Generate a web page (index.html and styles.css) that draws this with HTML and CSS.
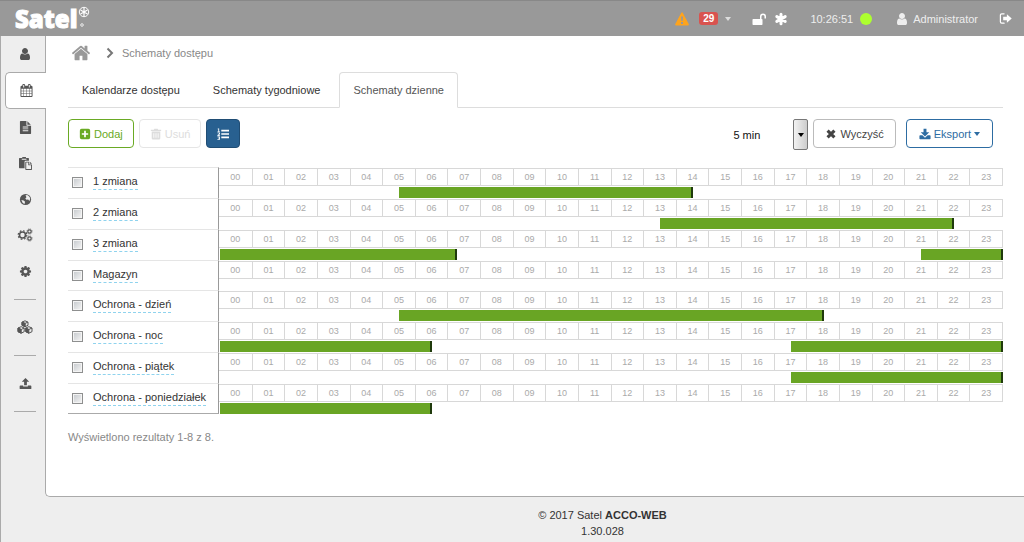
FILE: index.html
```html
<!DOCTYPE html>
<html lang="pl">
<head>
<meta charset="utf-8">
<title>Satel ACCO-WEB</title>
<link rel="stylesheet" href="styles.css">
</head>
<body>
<svg class="sprite" aria-hidden="true">
  <symbol id="i-user" viewBox="0 0 1792 1792"><path d="M1536 1399q0 109-62.500 187t-150.500 78h-854q-88 0-150.500-78t-62.500-187q0-85 8.500-160.500t31.500-152 58.500-131 94-89 134.500-34.500q131 128 313 128t313-128q76 0 134.500 34.500t94 89 58.500 131 31.500 152 8.500 160.500zm-256-887q0 159-112.500 271.500t-271.500 112.500-271.500-112.500-112.500-271.500 112.500-271.500 271.500-112.500 271.500 112.500 112.500 271.500z"/></symbol>
  <symbol id="i-home" viewBox="0 0 1792 1792"><path d="M1472 992v480q0 26-19 45t-45 19h-384v-384h-256v384h-384q-26 0-45-19t-19-45v-480q0-1 .5-3t.5-3l575-474 575 474q1 2 1 6zm223-69l-62 74q-8 9-21 11h-3q-13 0-21-7l-692-577-692 577q-12 8-24 7-13-2-21-11l-62-74q-8-10-7-23.500t11-21.500l719-599q32-26 76-26t76 26l244 204v-195q0-14 9-23t23-9h192q14 0 23 9t9 23v408l219 182q10 8 11 21.500t-7 23.500z"/></symbol>
  <symbol id="i-calendar" viewBox="0 0 1792 1792"><path d="M192 1664h288v-288h-288v288zm352 0h320v-288h-320v288zm-352-352h288v-320h-288v320zm352 0h320v-320h-320v320zm-352-384h288v-288h-288v288zm736 736h320v-288h-320v288zm-384-736h320v-288h-320v288zm768 736h288v-288h-288v288zm-384-352h320v-320h-320v320zm-352-864v-288q0-13-9.500-22.500t-22.500-9.500h-64q-13 0-22.500 9.500t-9.500 22.500v288q0 13 9.500 22.500t22.500 9.500h64q13 0 22.500-9.500t9.500-22.500zm736 864h288v-320h-288v320zm-384-384h320v-288h-320v288zm384 0h288v-288h-288v288zm32-480v-288q0-13-9.500-22.500t-22.500-9.500h-64q-13 0-22.500 9.500t-9.500 22.500v288q0 13 9.500 22.500t22.500 9.500h64q13 0 22.500-9.500t9.500-22.500zm384-64v1280q0 52-38 90t-90 38h-1408q-52 0-90-38t-38-90v-1280q0-52 38-90t90-38h128v-96q0-66 47-113t113-47h64q66 0 113 47t47 113v96h384v-96q0-66 47-113t113-47h64q66 0 113 47t47 113v96h128q52 0 90 38t38 90z"/></symbol>
  <symbol id="i-file" viewBox="0 0 1792 1792"><path d="M1596 476q14 14 28 36h-472v-472q22 14 36 28zm-476 164h544v1056q0 40-28 68t-68 28h-1344q-40 0-68-28t-28-68v-1600q0-40 28-68t68-28h800v544q0 40 28 68t68 28zm160 736v-64q0-14-9-23t-23-9h-704q-14 0-23 9t-9 23v64q0 14 9 23t23 9h704q14 0 23-9t9-23zm0-256v-64q0-14-9-23t-23-9h-704q-14 0-23 9t-9 23v64q0 14 9 23t23 9h704q14 0 23-9t9-23zm0-256v-64q0-14-9-23t-23-9h-704q-14 0-23 9t-9 23v64q0 14 9 23t23 9h704q14 0 23-9t9-23z"/></symbol>
  <symbol id="i-paste" viewBox="0 0 14 14"><path fill-rule="evenodd" d="M1 1h2.500V0h4v1H10q.7 0 .7.700V4H7Q6 4 6 5v7H.7Q0 12 0 11.300V1.700Q0 1 .7 1zM3 2v1h5V2zM7.500 5H11v3h3v5.300q0 .7-.7.700H7.500q-.7 0-.7-.7V5.700q0-.7.700-.7zM7.800 6v7H13V9h-3V6zM11.700 5L14 7.300h-2.300z"/></symbol>
  <symbol id="i-globe" viewBox="0 0 14 14"><circle cx="7" cy="7" r="6"/><path class="land" d="M7 2.200L9.500 2.500 11.500 4.300 12 6.500 11.300 8.500 9.800 7 8 7.300 6.800 6 8 4.500zM2.500 7.500L5 8l1.500 1.500L6 11.800 4 10.800z"/></symbol>
  <symbol id="i-cog" viewBox="0 0 1792 1792"><path d="M1152 896q0-106-75-181t-181-75-181 75-75 181 75 181 181 75 181-75 75-181zm512-109v222q0 12-8 23t-20 13l-185 28q-19 54-39 91 35 50 107 138 10 12 10 25t-9 23q-27 37-99 108t-94 71q-12 0-26-9l-138-108q-44 23-91 38-16 136-29 186-7 28-36 28h-222q-14 0-24.500-8.500t-11.500-21.500l-28-184q-49-16-90-37l-141 107q-10 9-25 9-14 0-25-11-126-114-165-168-7-10-7-23 0-12 8-23 15-21 51-66.500t54-70.500q-27-50-41-99l-183-27q-13-2-21-12.500t-8-23.500v-222q0-12 8-23t19-13l186-28q14-46 39-92-40-57-107-138-10-12-10-24 0-10 9-23 26-36 98.500-107.500t94.500-71.500q13 0 26 10l138 107q44-23 91-38 16-136 29-186 7-28 36-28h222q14 0 24.500 8.500t11.500 21.500l28 184q49 16 90 37l142-107q9-9 24-9 13 0 25 10 129 119 165 170 7 8 7 22 0 12-8 23-15 21-51 66.500t-54 70.500q26 50 41 98l183 28q13 2 21 12.500t8 23.500z"/></symbol>
  <symbol id="i-cogs" viewBox="0 0 16 14"><g fill="none" stroke="currentColor"><circle cx="5.500" cy="7" r="3" stroke-width="1.600"/><circle cx="5.500" cy="7" r="4.300" stroke-width="1.200" stroke-dasharray="1.700 1.677"/><circle cx="12.500" cy="3.500" r="1.700" stroke-width="1.200"/><circle cx="12.500" cy="3.500" r="2.600" stroke-width=".8" stroke-dasharray="1 1.040"/><circle cx="12.500" cy="10.500" r="1.700" stroke-width="1.200"/><circle cx="12.500" cy="10.500" r="2.600" stroke-width=".8" stroke-dasharray="1 1.040"/></g></symbol>
  <symbol id="i-cubes" viewBox="0 0 16 14"><g stroke="currentColor" stroke-width="1" stroke-linejoin="round"><path fill="none" d="M8 .8l3 1.300v3.200L8 6.700 5 5.300V2.100zM8 3.400v3.300M5 2.100l3 1.300 3-1.300M4.200 6.700l3 1.300v3.700l-3 1.500-3.200-1.500V8zM1 8l3.200 1.500L7.200 8M11.800 6.700l3.200 1.300v3.700l-3.200 1.500-3-1.500V8zM8.800 8l3 1.500L15 8"/><path d="M5 2.100l3 1.300v3.300L5 5.300zM1 8l3.200 1.500v3.700L1 11.700zM8.800 8l3 1.500v3.700l-3-1.500z"/></g></symbol>
  <symbol id="i-upload" viewBox="0 0 14 14"><path d="M7 1l4 4.200H8.500V9h-3V5.200H3zM1.500 9.200h3v1h5v-1h3q.8 0 .8.800v2.300q0 .7-.8.700h-11q-.8 0-.8-.7V10q0-.8.800-.8z"/></symbol>
  <symbol id="i-download" viewBox="0 0 14 14"><path d="M5.300 1h3.400v4H12L7 9.800 2 5h3.300zM1.300 8.500H4l3 2.800 3-2.800h2.700q.8 0 .8.800v2.900q0 .8-.8.800H1.300q-.8 0-.8-.8V9.300q0-.8.800-.8z"/></symbol>
  <symbol id="i-warn" viewBox="0 0 14 14"><path fill-rule="evenodd" d="M6.300.8q.7-1 1.400 0l6 11.200q.5 1.300-.8 1.500H1.100Q-.2 13.300.3 12zM6 4.500L6.300 9h1.400L8 4.500zM6 10v2h2v-2z"/></symbol>
  <symbol id="i-unlock" viewBox="0 0 14 14"><path d="M1.200 7H8V4.500a3 3 0 0 1 6 0V6.500h-1.500v-2a1.500 1.500 0 0 0-3 0V7h.3q.7 0 .7.700v4.600q0 .7-.7.700H1.200q-.7 0-.7-.7V7.700q0-.7.700-.7z"/></symbol>
  <symbol id="i-asterisk" viewBox="0 0 14 14"><path fill="none" stroke="currentColor" stroke-width="3" stroke-linecap="round" d="M7 2.200v9.600M2.800 4.600l8.400 4.800M2.800 9.400l8.400-4.800"/></symbol>
  <symbol id="i-signout" viewBox="0 0 14 14"><path fill="none" stroke="currentColor" stroke-width="1.300" stroke-linecap="round" d="M5.500 2H3Q1.500 2 1.500 3.500v7Q1.500 12 3 12h2.500"/><path d="M8.500 2.300L13.700 7l-5.200 4.700V9H4.500V5h4z"/></symbol>
  <symbol id="i-plus" viewBox="0 0 14 14"><path fill-rule="evenodd" d="M3 1h8q2 0 2 2v8q0 2-2 2H3q-2 0-2-2V3q0-2 2-2zM6 3.300V6H3.300v2H6v2.700h2V8h2.700V6H8V3.300z"/></symbol>
  <symbol id="i-trash" viewBox="0 0 14 14"><path fill-rule="evenodd" d="M4.500 2L5 .8h4L9.500 2H13v1.500H1V2zM2 4.200h10V12q0 1.500-1.500 1.500h-7Q2 13.500 2 12zM4 6v5.500h1V6zM6.500 6v5.500h1V6zM9 6v5.500h1V6z"/></symbol>
  <symbol id="i-list" viewBox="0 0 14 14"><path d="M5 2h9v2H5zM5 6h9v2H5zM5 10h9v2H5zM1 .5h1.500V4h1v.8H.5V4h1V1.500H.7zM.5 5.300h3v2L1.800 8.500h1.700v.8h-3v-1l1.800-1.400v-.7H.5zM.5 10h3v3.700h-3v-.8h2v-.7h-1v-.8h1v-.6h-2z"/></symbol>
  <symbol id="i-times" viewBox="0 0 14 14"><path fill="none" stroke="currentColor" stroke-width="3.600" d="M3 3l8 8M11 3l-8 8"/></symbol>
  <symbol id="i-chevron" viewBox="0 0 8 12"><path fill="none" stroke="currentColor" stroke-width="2" d="M1.500 1.500L6 6l-4.500 4.500"/></symbol>
  <symbol id="i-mark" viewBox="0 0 12 22"><g fill="none" stroke="currentColor"><circle cx="6" cy="6" r="4.700" stroke-width="1"/><path stroke-width="1.200" d="M6 2v8M2.500 4l7 4M2.500 8l7-4"/><circle cx="4" cy="19" r="1.300" stroke-width=".8"/></g></symbol>
</svg>

<header class="topbar">
  <a class="logo" href="#"><span>Satel</span><svg class="logo-mark"><use href="#i-mark"/></svg></a>
  <div class="status">
    <button class="alerts" type="button" aria-label="Alarmy"><svg class="icon warn"><use href="#i-warn"/></svg><span class="badge">29</span><span class="caret"></span></button>
    <div class="states"><svg class="icon"><use href="#i-unlock"/></svg><svg class="icon"><use href="#i-asterisk"/></svg></div>
    <div class="clock"><time>10:26:51</time><span class="dot"></span></div>
    <a class="account" href="#"><svg class="icon"><use href="#i-user"/></svg>Administrator</a>
    <a class="logout" href="#" aria-label="Wyloguj"><svg class="icon small"><use href="#i-signout"/></svg></a>
  </div>
</header>

<div class="body">
  <nav class="sidebar" aria-label="Menu">
    <a href="#" aria-label="Użytkownicy"><svg class="icon"><use href="#i-user"/></svg></a>
    <a href="#" class="active" aria-label="Schematy"><svg class="icon small"><use href="#i-calendar"/></svg></a>
    <a href="#" aria-label="Zdarzenia"><svg class="icon small"><use href="#i-file"/></svg></a>
    <a href="#" aria-label="Raporty"><svg class="icon small"><use href="#i-paste"/></svg></a>
    <a href="#" aria-label="Mapa"><svg class="icon small"><use href="#i-globe"/></svg></a>
    <a href="#" aria-label="Konfiguracja"><svg class="icon wide"><use href="#i-cogs"/></svg></a>
    <a href="#" aria-label="Ustawienia"><svg class="icon small"><use href="#i-cog"/></svg></a>
    <hr>
    <a href="#" aria-label="Moduły"><svg class="icon wide"><use href="#i-cubes"/></svg></a>
    <hr>
    <a href="#" aria-label="Wyślij"><svg class="icon small"><use href="#i-upload"/></svg></a>
    <hr>
  </nav>

  <main class="content">
    <div class="crumbs"><a href="#" aria-label="Start"><svg class="home"><use href="#i-home"/></svg></a><svg class="chevron"><use href="#i-chevron"/></svg><span>Schematy dostępu</span></div>
    <nav class="tabs">
      <a href="#">Kalendarze dostępu</a>
      <a href="#">Schematy tygodniowe</a>
      <a href="#" class="current">Schematy dzienne</a>
    </nav>
    <div class="toolbar">
      <button class="btn add" type="button"><svg class="glyph"><use href="#i-plus"/></svg>Dodaj</button>
      <button class="btn remove" type="button" disabled><svg class="glyph"><use href="#i-trash"/></svg>Usuń</button>
      <button class="btn list" type="button" aria-label="Lista"><svg class="glyph"><use href="#i-list"/></svg></button>
      <div class="step"><select aria-label="Krok"><option>5 min</option></select><span class="drop"><span class="caret"></span></span></div>
      <button class="btn clear" type="button"><svg class="glyph"><use href="#i-times"/></svg>Wyczyść</button>
      <button class="btn export" type="button"><svg class="glyph"><use href="#i-download"/></svg>Eksport<span class="caret"></span></button>
    </div>
    <table class="schedule"><tbody id="rows"></tbody></table>
    <p class="summary">Wyświetlono rezultaty 1-8 z 8.</p>
  </main>
</div>

<footer class="footer">
  <div>© 2017 Satel <strong>ACCO-WEB</strong></div>
  <div>1.30.028</div>
</footer>
<script src="script.js"></script>
</body>
</html>
```
FILE: styles.css
```css
* { box-sizing: border-box; }

body {
  margin: 0;
  min-height: 100vh;
  display: flex;
  flex-direction: column;
  background: #eee;
  color: #333;
  font: 11px/16px "Liberation Sans", Arial, sans-serif;
}

a { color: inherit; text-decoration: none; }
button, select { font: inherit; color: inherit; }
svg { fill: currentColor; display: block; flex: none; }
.sprite { position: absolute; width: 0; height: 0; }
.icon { width: 14px; height: 14px; }
.icon.small { width: 13px; height: 13px; }
.icon.wide { width: 16px; height: 14px; }
.glyph { width: 12px; height: 12px; }

.caret {
  border: 4px solid transparent;
  border-top-color: currentColor;
  border-bottom: 0;
}

/* Top bar */
.topbar {
  height: 36px;
  padding: 0 12px 0 15px;
  display: flex;
  align-items: center;
  justify-content: space-between;
  background: #999;
  border-top: 1px solid #888;
  color: #fff;
}
.logo { display: flex; align-items: flex-start; gap: 1px; }
.logo span {
  font: 900 24px/26px "Noto Sans", "Open Sans", sans-serif;
  -webkit-text-stroke: 1px #fff;
}
.logo-mark { width: 12px; height: 22px; }
.status { display: flex; align-items: center; color: #eee; }
.alerts {
  display: flex;
  align-items: center;
  padding: 0;
  border: 0;
  background: none;
  color: #ddd;
}
.warn { color: #ffa41c; }
.badge {
  margin: 0 7px 0 10px;
  padding: 0 4px;
  border-radius: 3px;
  background: #d9534f;
  color: #fff;
  font-weight: bold;
  font-size: 10px;
  line-height: 13px;
}
.alerts .caret { border-width: 4px 3px 0; }
.states { display: flex; gap: 8px; margin-left: 21px; color: #fff; }
.clock { display: flex; align-items: center; gap: 7px; margin-left: 22px; }
.dot { width: 12px; height: 12px; border-radius: 50%; background: #adff2f; }
.account { display: flex; align-items: center; gap: 4px; margin-left: 23px; }
.logout { margin-left: 21px; color: #fff; }

/* Sidebar */
.body { flex: 1; display: flex; border-left: 1px solid #aaa; }
.sidebar {
  width: 44px;
  flex: none;
  display: flex;
  flex-direction: column;
  color: #555;
}
.sidebar a {
  height: 36px;
  padding-left: 4px;
  display: flex;
  align-items: center;
  justify-content: center;
}
.sidebar .active {
  height: 37px;
  margin: 0 -1px 0 4px;
  padding: 0;
  z-index: 1;
  border: 1px solid #aaa;
  border-right: 0;
  border-radius: 5px 0 0 5px;
  background: #fff;
}
.sidebar hr {
  width: 22px;
  margin: 10px auto 9px 13px;
  border: 0;
  border-top: 1px solid #aaa;
}
.land { fill: #eee; }

/* Content */
.content {
  flex: 1;
  min-width: 0;
  padding: 7px 21px 24px 22px;
  background: #fff;
  border-left: 1px solid #aaa;
  border-bottom: 1px solid #aaa;
  border-bottom-left-radius: 5px;
}
.crumbs { display: flex; align-items: center; height: 20px; padding-left: 3px; color: #888; }
.home { width: 20px; height: 20px; color: #999; }
.chevron { width: 8px; height: 12px; margin: 0 8px 0 15px; color: #777; }
.tabs { display: flex; gap: 5px; margin-top: 9px; border-bottom: 1px solid #ddd; }
.tabs a {
  height: 35px;
  margin-bottom: -1px;
  padding: 9px 13px;
  border: 1px solid transparent;
  white-space: nowrap;
}
.tabs .current {
  height: 36px;
  border-color: #ddd #ddd #fff;
  border-radius: 4px 4px 0 0;
  background: #fff;
  color: #555;
}

.toolbar { display: flex; align-items: flex-start; gap: 5px; padding: 11px 10px 0 0; }
.btn {
  height: 29px;
  padding: 0 10px;
  display: flex;
  align-items: center;
  gap: 3px;
  border: 1px solid currentColor;
  border-radius: 4px;
  background: #fff;
}
.btn.add { color: #6aaa24; }
.btn.remove { border-color: #e5e5e5; color: #ddd; }
.btn.list { background: #286090; border-color: #204d74; color: #fff; }
.btn.clear { padding: 0 11px; border-color: #bbb; color: #444; }
.btn.export { padding: 0 12px; margin-left: 5px; color: #2d6ca2; }
.step { display: grid; width: 80px; margin-left: auto; color: #111; }
.step > * { grid-area: 1 / 1; }
.step select { appearance: none; height: 31px; border: 0; padding: 0 5px; background: #fff; }
.drop {
  justify-self: end;
  width: 15px;
  display: grid;
  place-content: center;
  border: 1px solid #777;
  border-radius: 2px;
  background: linear-gradient(to right, #f2f2f2, #ccc);
  pointer-events: none;
}
.drop .caret, .export .caret { border-width: 4px 3px 0; }
.drop .caret { border-top-color: #000; }

/* Schedule */
.schedule {
  width: 100%;
  margin-top: 17px;
  border-collapse: separate;
  border-spacing: 0;
  table-layout: fixed;
}
.schedule td { padding: 0; vertical-align: top; }
.schedule .slots { padding-top: 1px; }
.name {
  width: 151px;
  border-top: 1px solid #e5e5e5;
  border-right: 1px solid #999;
}
.schedule tr:last-child .name { border-bottom: 1px solid #aaa; }
.name label { display: flex; align-items: center; gap: 10px; padding: 6px 0 0 4px; white-space: nowrap; }
.name label span { border-bottom: 1px dashed #8fd3ee; line-height: 15px; }
.name input {
  appearance: none;
  flex: none;
  width: 11px;
  height: 11px;
  margin: 0;
  border: 1px solid #8e8f8f;
  background: linear-gradient(135deg, #c4c8cc, #f6f6f6);
  box-shadow: inset 0 0 0 1px #f4f4f4;
}
.hours {
  display: grid;
  grid-template-columns: repeat(24, 1fr);
  border: 1px solid #d8d8d8;
  border-left: 0;
  color: #aaa;
  font-size: 9px;
  line-height: 16px;
  text-align: center;
}
.hours span + span { border-left: 1px solid #d8d8d8; }
.track { position: relative; height: 12px; margin-left: 1px; }
.track.empty { height: 11px; }
.bar {
  position: absolute;
  top: 1px;
  height: 11px;
  border-right: 2px solid #1f3a0c;
  background: #69a524;
}
.summary { margin: 15px 0 0; color: #888; }

.footer {
  padding: 10px 0 3px 180px;
  border-left: 1px solid #aaa;
  text-align: center;
}
```
FILE: script.js
```js
const schedules = [
  ["1 zmiana", [[5.5, 14.5]]],
  ["2 zmiana", [[13.5, 22.5]]],
  ["3 zmiana", [[0, 7.25], [21.5, 24]]],
  ["Magazyn", []],
  ["Ochrona - dzień", [[5.5, 18.5]]],
  ["Ochrona - noc", [[0, 6.5], [17.5, 24]]],
  ["Ochrona - piątek", [[17.5, 24]]],
  ["Ochrona - poniedziałek", [[0, 6.5]]]
];

const hours = Array.from({ length: 24 }, (_, h) => `<span>${String(h).padStart(2, "0")}</span>`).join("");

document.getElementById("rows").innerHTML = schedules.map(([name, ranges]) => {
  const bars = ranges.map(([from, to]) =>
    `<span class="bar" style="left:${from / 24 * 100}%;width:${(to - from) / 24 * 100}%"></span>`).join("");
  return `<tr>
    <td class="name"><label><input type="checkbox"><span>${name}</span></label></td>
    <td class="slots"><div class="hours">${hours}</div><div class="track${ranges.length ? "" : " empty"}">${bars}</div></td>
  </tr>`;
}).join("");
```
